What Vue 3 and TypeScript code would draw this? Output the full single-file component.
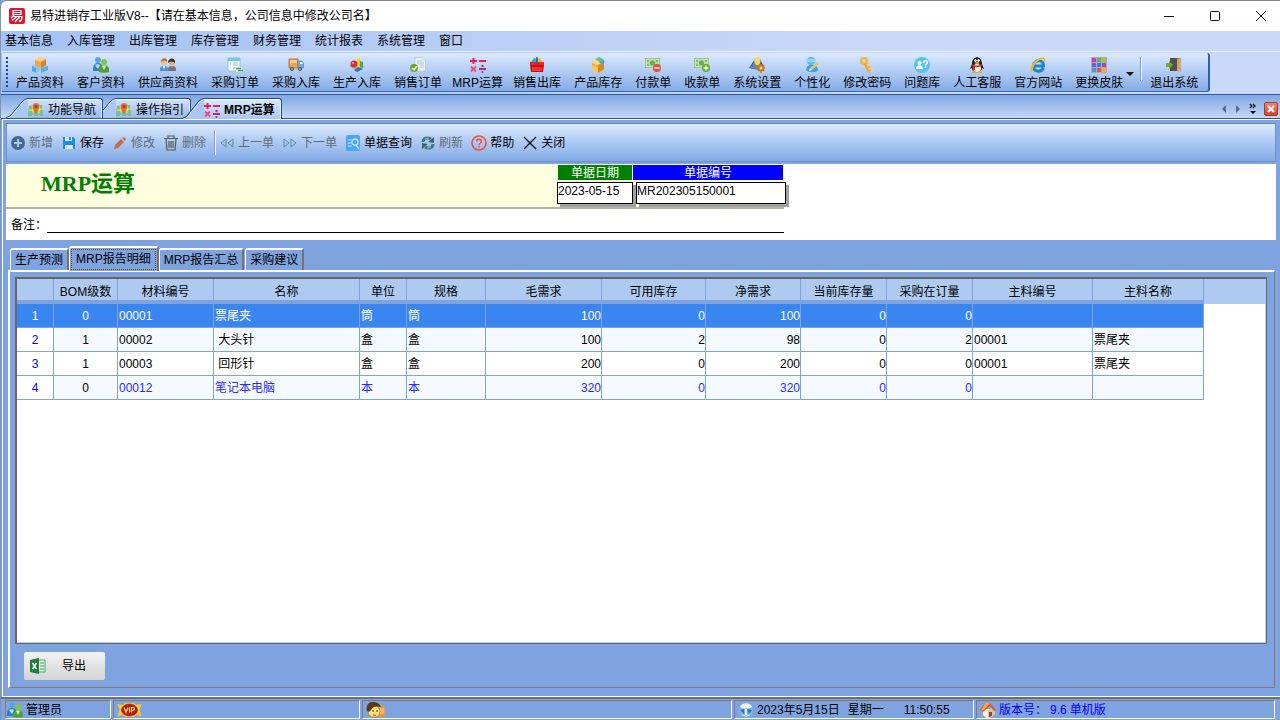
<script setup lang="ts">
import { ref } from 'vue'

interface Tool { icon: string; label: string; narrow?: boolean }
interface Action extends Tool { off?: boolean; sep?: boolean }
interface Column { label: string; width: number; align: string }

const menus = ['基本信息', '入库管理', '出库管理', '库存管理', '财务管理', '统计报表', '系统管理', '窗口']

const tools: Tool[] = [
  { icon: 'boxes', label: '产品资料' },
  { icon: 'buddies', label: '客户资料' },
  { icon: 'people', label: '供应商资料' },
  { icon: 'order', label: '采购订单' },
  { icon: 'truck', label: '采购入库' },
  { icon: 'shapes', label: '生产入库' },
  { icon: 'docok', label: '销售订单' },
  { icon: 'calc', label: 'MRP运算', narrow: true },
  { icon: 'basket', label: '销售出库' },
  { icon: 'stock', label: '产品库存' },
  { icon: 'pay', label: '付款单' },
  { icon: 'receive', label: '收款单' },
  { icon: 'settings', label: '系统设置' },
  { icon: 'custom', label: '个性化' },
  { icon: 'keys', label: '修改密码' },
  { icon: 'faq', label: '问题库' },
  { icon: 'penguin', label: '人工客服' },
  { icon: 'browser', label: '官方网站' },
  { icon: 'skin', label: '更换皮肤' },
]

const docTabs: Tool[] = [
  { icon: 'map', label: '功能导航' },
  { icon: 'map', label: '操作指引' },
  { icon: 'calc', label: 'MRP运算' },
]
const activeDoc = ref(2)

const actions: Action[] = [
  { icon: 'add', label: '新增', off: true },
  { icon: 'save', label: '保存' },
  { icon: 'pencil', label: '修改', off: true },
  { icon: 'trash', label: '删除', off: true, sep: true },
  { icon: 'prev', label: '上一单', off: true },
  { icon: 'next', label: '下一单', off: true },
  { icon: 'query', label: '单据查询' },
  { icon: 'refresh', label: '刷新', off: true },
  { icon: 'help', label: '帮助' },
  { icon: 'cross', label: '关闭' },
]

const pages = ['生产预测', 'MRP报告明细', 'MRP报告汇总', '采购建议']
const activePage = ref(1)

const billDate = ref('2023-05-15')
const billNo = ref('MR202305150001')
const remark = ref('')

const columns: Column[] = [
  { label: '', width: 37, align: 'c' },
  { label: 'BOM级数', width: 64, align: 'c' },
  { label: '材料编号', width: 96, align: 'l' },
  { label: '名称', width: 146, align: 'l' },
  { label: '单位', width: 47, align: 'l' },
  { label: '规格', width: 79, align: 'l' },
  { label: '毛需求', width: 116, align: 'r' },
  { label: '可用库存', width: 104, align: 'r' },
  { label: '净需求', width: 95, align: 'r' },
  { label: '当前库存量', width: 86, align: 'r' },
  { label: '采购在订量', width: 86, align: 'r' },
  { label: '主料编号', width: 120, align: 'l' },
  { label: '主料名称', width: 111, align: 'l' },
]

const rows: string[][] = [
  ['1', '0', '00001', '票尾夹', '筒', '筒', '100', '0', '100', '0', '0', '', ''],
  ['2', '1', '00002', ' 大头针', '盒', '盒', '100', '2', '98', '0', '2', '00001', '票尾夹'],
  ['3', '1', '00003', ' 回形针', '盒', '盒', '200', '0', '200', '0', '0', '00001', '票尾夹'],
  ['4', '0', '00012', '笔记本电脑', '本', '本', '320', '0', '320', '0', '0', '', ''],
]
const selected = ref(0)
</script>

<template>
  <svg class="defs" aria-hidden="true">
    <symbol id="boxes" viewBox="0 0 16 16">
      <path d="M0 9l4-2 4 2v5l-4 2-4-2z" fill="#8cc8f0" /><path d="M0 9l4 2v5l-4-2z" fill="#5aa5dc" />
      <path d="M8 9l4-2 4 2v4l-7 3-1-2z" fill="#9bd3f5" /><path d="M9 11l7-2v4l-7 3z" fill="#64abdf" />
      <path d="M3 3l5-3 6 2v6l-5 3-6-3z" fill="#f3a447" /><path d="M3 3l5-3 6 2-5 3z" fill="#ffd18a" /><path d="M9 5l5-3v6l-5 3z" fill="#d9812b" />
    </symbol>
    <symbol id="buddies" viewBox="0 0 16 16">
      <circle cx="5" cy="3" r="3" fill="#59a8de" /><path d="M0 14c0-5 1-8 5-8s5 3 5 8z" fill="#2f7fc4" /><path d="M2 8c1-1 4-1 5 0l-2 4z" fill="#b9e0f7" />
      <circle cx="11" cy="5" r="3" fill="#7fc64a" /><path d="M6 15c-1-5 2-7 5-7s6 2 5 7c-3 1-8 1-10 0z" fill="#4fa32a" /><path d="M9 9c1-1 3-1 4 0l-2 4z" fill="#d3f2b5" />
    </symbol>
    <symbol id="people" viewBox="0 0 16 16">
      <circle cx="4" cy="5" r="3" fill="#f5bd88" /><path d="M1 5c0-5 7-5 6 0-2-2-4-2-6 0z" fill="#bb6a26" /><path d="M0 14c0-4 1-5 4-5s4 1 4 5z" fill="#4c8fd6" /><path d="M3 9h2l-1 4z" fill="#fff" />
      <circle cx="12" cy="5" r="3" fill="#e9a673" /><path d="M8 6c0-6 8-6 7 0-2-2-4-2-7 0z" fill="#3b2d28" /><path d="M8 14c0-4 1-5 4-5s4 1 4 5z" fill="#776e7c" /><path d="M11 9h2l-1 4z" fill="#f05d4e" />
    </symbol>
    <symbol id="order" viewBox="0 0 16 16">
      <path d="M1 1h12v13H1z" fill="#fff" stroke="#83c7de" /><path d="M1 1h12v3H1z" fill="#77c7e2" /><path d="M3 6h1m2 0h5M3 8h1m2 0h5M3 11h1m2 0h3" stroke="#7ebfd0" />
      <path d="M9 10h6v5H9z" fill="#d9f0d3" /><path d="M9 11.500h5m-3 2h5" stroke="#4daa4e" stroke-width="1.400" />
    </symbol>
    <symbol id="truck" viewBox="0 0 16 16">
      <path d="M1 2h9v9H1z" fill="#e9a462" stroke="#bd7434" /><path d="M2 3h7v3H2z" fill="#f7c891" /><path d="M10 4h4l2 3v4h-6z" fill="#75add8" stroke="#477ba6" stroke-width=".6" /><path d="M12 5h2l1 2h-3z" fill="#dff2ff" />
      <circle cx="4" cy="12" r="2" fill="#555" /><circle cx="12" cy="12" r="2" fill="#555" /><circle cx="4" cy="12" r=".8" fill="#ddd" /><circle cx="12" cy="12" r=".8" fill="#ddd" />
    </symbol>
    <symbol id="shapes" viewBox="0 0 16 16">
      <path d="M0 9l6-4 10 4-7 6z" fill="#90b8e6" /><path d="M8 2l3-1v9l-3 2z" fill="#efcf3c" /><path d="M11 4l3 1v6l-3-1z" fill="#4ca84d" /><circle cx="5" cy="7" r="3.5" fill="#d63232" /><circle cx="4" cy="6" r="1" fill="#ff9a9a" /><path d="M9 10l5 2-6 3-3-2z" fill="#456cb4" />
    </symbol>
    <symbol id="docok" viewBox="0 0 16 16">
      <path d="M5 .5h8l2.500 2.500v11H5z" fill="#e8eff2" stroke="#b3c4cd" stroke-width=".7" /><path d="M13 .5v2.500h2.500" fill="#fff" stroke="#b3c4cd" stroke-width=".7" /><path d="M7 4h5M7 6h7M9 8h5m-4 2h4" stroke="#b7c9d0" />
      <circle cx="4" cy="11" r="4" fill="#6ca62c" /><path d="M2 11l2 2 3-4" fill="none" stroke="#fff" stroke-width="1.4" />
    </symbol>
    <symbol id="calc" viewBox="0 0 16 16">
      <path d="M3.500 1v6M0 4h7" stroke="#ec1b5a" stroke-width="2" /><path d="M9 4h7" stroke="#ec1b5a" stroke-width="2" /><path d="M1 9.500l5 5m0-5l-5 5" stroke="#f0497c" stroke-width="2" /><path d="M9 12h7" stroke="#b52a74" stroke-width="2" /><circle cx="12.500" cy="9" r="1.200" fill="#b52a74" /><circle cx="12.500" cy="15" r="1" fill="#b52a74" />
    </symbol>
    <symbol id="basket" viewBox="0 0 16 16">
      <path d="M2 5l3-4 3 1v4z" fill="#27aee3" /><path d="M8 2l3-1 3 4H8z" fill="#f1b73b" /><path d="M1 5h14v4H1z" fill="#ef2323" /><path d="M1 8h14l-1 7H2z" fill="#cc1010" /><path d="M3 11h10M3 13h10" stroke="#ff6464" /><path d="M8 0v7" stroke="#34536b" stroke-width="1.500" />
    </symbol>
    <symbol id="stock" viewBox="0 0 16 16">
      <path d="M2 6l6 2 6-3v7l-6 4-6-3z" fill="#f3ae39" /><path d="M8 8l6-3v7l-6 4z" fill="#d9871f" /><path d="M1 5l4-2 4 3-2 2z" fill="#ffd771" /><path d="M5 2l4-2 4 2-3 3z" fill="#73c451" /><path d="M9 5l4-3 2 3-4 2z" fill="#4ba5d6" /><path d="M2 8l6 3v5l-6-3z" fill="#ffc75f" />
    </symbol>
    <symbol id="pay" viewBox="0 0 16 16">
      <path d="M0 1h15v10H0z" fill="#7fb56d" /><path d="M1 2h13v8H1z" fill="#b5dba0" stroke="#e4f3da" stroke-width=".6" /><circle cx="7.500" cy="6" r="2.500" fill="#6ea75c" /><path d="M2 4h2m7 0h2M2 8h2" stroke="#659b57" /><circle cx="12" cy="11" r="4" fill="#e54c37" /><path d="M9.500 11h5" stroke="#fff" stroke-width="1.600" />
    </symbol>
    <symbol id="receive" viewBox="0 0 16 16">
      <path d="M0 1h15v10H0z" fill="#7fb56d" /><path d="M1 2h13v8H1z" fill="#b5dba0" stroke="#e4f3da" stroke-width=".6" /><circle cx="7.500" cy="6" r="2.500" fill="#6ea75c" /><path d="M2 4h2m7 0h2M2 8h2" stroke="#659b57" /><circle cx="12" cy="11" r="4" fill="#63a927" /><path d="M9.500 11h5M12 8.500v5" stroke="#fff" stroke-width="1.400" />
    </symbol>
    <symbol id="settings" viewBox="0 0 16 16">
      <path d="M0 11L6 2h5l4 8-5 3z" fill="#385f92" /><path d="M1 11l6-8v9z" fill="#5e88b8" /><path d="M8 0c5 0 4 5 2 8H7C4 4 5 0 8 0z" fill="#f5d56b" /><path d="M7 8h3v3H7z" fill="#888" /><circle cx="12" cy="11" r="2.500" fill="#f8dda0" stroke="#c87a18" stroke-width="2" /><path d="M12 7v1m0 6v2m-5-5h2m6 0h1M9 8l1 1m5 5l-1-1m1-5l-1 1m-5 5l1-1" stroke="#c87a18" stroke-width="1.500" />
    </symbol>
    <symbol id="custom" viewBox="0 0 16 16">
      <circle cx="7" cy="4" r="4" fill="#5bbdf1" /><path d="M2 2h10v3H2z" fill="#91d6fb" /><path d="M2 13c0-7 12-7 12 0-1 3-10 3-12 0z" fill="#38a5e8" /><path d="M6 11l7-6 2 2-7 6-3 1z" fill="#eebf63" /><path d="M5 14l1-3 2 2z" fill="#fff1ce" />
    </symbol>
    <symbol id="keys" viewBox="0 0 16 16">
      <path d="M7 5l8 8-1 2-3-1-6-7z" fill="#e0cfae" /><circle cx="5" cy="4" r="3" fill="none" stroke="#f4b83d" stroke-width="2.500" /><path d="M5 7l3 7 3 2-1-3-3-7z" fill="#eea52a" /><path d="M8 11l3-1m-2 4l3-1" stroke="#f0b33a" stroke-width="1.500" />
    </symbol>
    <symbol id="faq" viewBox="0 0 16 16">
      <circle cx="8" cy="8" r="8" fill="#55c4ed" /><circle cx="5.500" cy="6" r="2" fill="#fff" /><path d="M2 12c0-5 7-5 7 0z" fill="#fff" /><path d="M9.500 6c0-3 4-3 4-1 0 2-2 2-2 3.500m0 1v1.500" fill="none" stroke="#fff" stroke-width="1.500" />
    </symbol>
    <symbol id="penguin" viewBox="0 0 16 16">
      <path d="M3 7c0-9 10-9 10 0l2 5-2-1c0 5-10 5-10 0l-2 1z" fill="#191919" /><ellipse cx="8" cy="11" rx="4" ry="4" fill="#fff" /><ellipse cx="6.500" cy="3.500" rx="1.200" ry="1.600" fill="#fff" /><ellipse cx="9.500" cy="3.500" rx="1.200" ry="1.600" fill="#fff" /><path d="M5 6q3-2 6 0-3 2-6 0" fill="#f6a821" /><path d="M3 7q5 3 10 0v2q-5 2-7 1v3H4z" fill="#df2b25" /><path d="M3 15q2-2 5 0 3-2 5 0v1H3z" fill="#f3a51b" />
    </symbol>
    <symbol id="browser" viewBox="0 0 16 16">
      <path d="M13.500 11C11 16 3 15 3.500 8.500S14 2 13.500 9H5" fill="none" stroke="#1f83d0" stroke-width="3" /><path d="M1 15C-2 9 8-2 15 1c1 2-1 4-1 4 1-7-12 1-11 9z" fill="#f1b52b" />
    </symbol>
    <symbol id="skin" viewBox="0 0 16 16">
      <path d="M0 0h16v16H0z" fill="#b9a6b4" /><path d="M1 1h4v4H1z" fill="#d630cf" /><path d="M6 1h4v4H6z" fill="#55bd45" /><path d="M11 1h4v4h-4z" fill="#86d331" /><path d="M1 6h4v4H1z" fill="#765be2" /><path d="M6 6h4v4H6z" fill="#2583e8" /><path d="M11 6h4v4h-4z" fill="#a53de0" /><path d="M1 11h4v4H1z" fill="#31a1e5" /><path d="M6 11h4v4H6z" fill="#ef5038" /><path d="M11 11h4v4h-4z" fill="#efb02d" />
    </symbol>
    <symbol id="exit" viewBox="0 0 16 16">
      <path d="M4 1h11v13H4z" fill="#b4814b" /><path d="M4 1h7v13H4z" fill="#55504d" /><path d="M11 3l4-2v14l-4-1z" fill="#d5a669" /><path d="M0 6h3V4l4 4-4 4v-2H0z" fill="#6caf22" />
    </symbol>
    <symbol id="map" viewBox="0 0 16 16">
      <path d="M1 4l13-1 1 11H0z" fill="#80c15a" /><path d="M1 8l14-1M5 4v10m6-10v10" stroke="#f5e7a1" stroke-width="1.200" /><path d="M1 11.500l14 1" stroke="#6cb8e0" stroke-width="2" /><path d="M8 12C3 6 4 1 8 1s5 4 0 11z" fill="#ed6c2f" /><circle cx="8" cy="4.500" r="1.600" fill="#8c4b22" />
    </symbol>
    <symbol id="add" viewBox="0 0 16 16"><circle cx="8" cy="8" r="7" fill="#476890" /><path d="M8 4v8M4 8h8" stroke="#a9c6ed" stroke-width="2" /></symbol>
    <symbol id="save" viewBox="0 0 16 16"><path d="M2 2h10l2 2v10H2z" fill="#168bf0" /><path d="M4 2h7v4H4z" fill="#dcecff" /><path d="M8 2h2v3H8z" fill="#168bf0" /><path d="M4 10h8v4H4z" fill="#dcecff" /></symbol>
    <symbol id="pencil" viewBox="0 0 16 16"><path d="M2 14l1-4 6-6 3 3-6 6z" fill="#c86a43" /><path d="M10 3l2-1 2 2-1 2z" fill="#c86a43" /></symbol>
    <symbol id="trash" viewBox="0 0 16 16"><path d="M3 4l1 11h8l1-11M1 3.500h14M5 3V1h6v2M6 6v7m2-7v7m2-7v7" fill="none" stroke="#575b51" stroke-width="1.200" /></symbol>
    <symbol id="prev" viewBox="0 0 16 16"><path d="M7 4v8L2 8zM14 4v8L9 8z" fill="none" stroke="#5d8898" /></symbol>
    <symbol id="next" viewBox="0 0 16 16"><path d="M2 4v8l5-4zM9 4v8l5-4z" fill="none" stroke="#4e929b" /></symbol>
    <symbol id="query" viewBox="0 0 16 16"><rect x="1" y="0" width="14" height="16" rx="2" fill="#4ca6f2" /><path d="M3 5h4M3 8h3m-3 3h4" stroke="#c5e2ff" /><circle cx="10" cy="7" r="3" fill="none" stroke="#c5e2ff" stroke-width="1.300" /><path d="M11 10l3 4" stroke="#c5e2ff" stroke-width="1.300" /></symbol>
    <symbol id="refresh" viewBox="0 0 16 16"><path d="M3 7c0-4 5-5 8-3m2 5c0 4-5 5-8 3" fill="none" stroke="#3f7884" stroke-width="3" /><path d="M8 7l6 1V2zM8 9l-6-1v6z" fill="#42636e" /><path d="M5 4l4-1m-2 10l4-1" stroke="#8fc6d2" /></symbol>
    <symbol id="help" viewBox="0 0 16 16"><circle cx="8" cy="8" r="7" fill="none" stroke="#f04b32" stroke-width="1.600" /><path d="M5.500 6.500c0-3 5-3 5 0 0 1.500-2.500 1.500-2.500 3.500m0 1v1.500" fill="none" stroke="#f04b32" stroke-width="1.400" /></symbol>
    <symbol id="cross" viewBox="0 0 16 16"><path d="M2 2l12 12M14 2L2 14" stroke="#111" stroke-width="1.400" /></symbol>
    <symbol id="excel" viewBox="0 0 16 16"><path d="M8 2h7v12H8z" fill="#e6f4e8" stroke="#4ea568" /><path d="M10 5h4m-4 3h4m-4 3h4" stroke="#71bd83" stroke-width="1.500" /><path d="M0 2l9-2v16l-9-2z" fill="#1d7d3f" /><path d="M2.500 5l4 6m0-6l-4 6" stroke="#fff" stroke-width="1.500" /></symbol>
    <symbol id="vip" viewBox="0 0 24 16"><path d="M0 2l5 1 3-2h8l3 2 5-1-2 6 2 6-5-1-3 2H8l-3-2-5 1 2-6z" fill="#f8cb35" /><ellipse cx="12" cy="8" rx="8" ry="6" fill="#c51310" stroke="#8f2a08" stroke-width=".6" /><path d="M6.500 5.500l2 5 2-5M12 5.500v5m2 0v-5h2q2 1 0 3h-2" fill="none" stroke="#ffe474" stroke-width="1.200" /></symbol>
    <symbol id="face" viewBox="0 0 20 16"><path d="M11 4h8v11h-8z" fill="#f0953d" /><path d="M14 7h4m-4 2h4m-4 2h4" stroke="#ffd19a" /><circle cx="8" cy="9.500" r="6" fill="#ffe177" stroke="#ac6d27" stroke-width=".7" /><path d="M1 9C-2-3 13-2 15 5 10 4 7 4 5 8l-2 2z" fill="#5e3620" /><path d="M7 8v2m4-2v2" stroke="#333" /><path d="M7 13q2 1 3 0" fill="none" stroke="#c32c1e" /></symbol>
    <symbol id="globe" viewBox="0 0 16 16"><circle cx="8" cy="8" r="7" fill="#7db4e0" /><path d="M2 5c2-5 10-5 12 0-3 2-9 2-12 0z" fill="#eef6fb" /><path d="M2 8l4-1v5zM9 7l5 1-3 4-1-2z" fill="#2f70b4" /><path d="M7 7h2v6H7z" fill="#d7eaf8" /><path d="M4 13q4 2 8 0" fill="none" stroke="#d7eaf8" /></symbol>
    <symbol id="home" viewBox="0 0 16 16"><path d="M3 7h9v8l-6 1-3-3z" fill="#fff4dc" /><path d="M8 9l4-4 3 4v4l-7 3z" fill="#d8c2a0" /><path d="M0 8l5-7h5l6 7-2 1-4-5-7 6z" fill="#df5b24" /><path d="M5 1h5l-6 7-3 1z" fill="#ff9b55" /><path d="M9 10h3v4l-3 1z" fill="#8b4a24" /></symbol>
  </svg>

  <div class="app">
    <header class="title">
      <svg class="logo" viewBox="0 0 16 16"><rect width="16" height="16" rx="2" fill="#e8112d" /><path d="M4 2.500h8v4H4zM4 4.500h8M5 7L2 10M4 8.500h9q0 4-2 5l-1-1M7.500 9L3 12.500M10.500 9L6 14" fill="none" stroke="#fff" stroke-width="1.200" /></svg>
      <h1>易特进销存工业版V8--【请在基本信息，公司信息中修改公司名】</h1>
      <button class="win" aria-label="最小化"><svg viewBox="0 0 12 12"><path d="M1 6.500h10" /></svg></button>
      <button class="win" aria-label="最大化"><svg viewBox="0 0 12 12"><rect x="1.500" y="1.500" width="9" height="9" rx="1" /></svg></button>
      <button class="win" aria-label="关闭窗口"><svg viewBox="0 0 12 12"><path d="M1 1l10 10M11 1L1 11" /></svg></button>
    </header>

    <nav class="menu">
      <button v-for="m in menus" :key="m">{{ m }}</button>
    </nav>

    <div class="band">
      <div class="tools">
        <i class="grip"></i>
        <button v-for="t in tools" :key="t.label" :class="{ narrow: t.narrow }"><svg><use :href="'#' + t.icon" /></svg>{{ t.label }}</button>
        <button class="drop" aria-label="更多皮肤"><i></i></button>
        <i class="rule"></i>
        <button><svg><use href="#exit" /></svg>退出系统</button>
      </div>
    </div>

    <div class="doctabs">
      <button v-for="(t, i) in docTabs" :key="t.label" class="tab" :class="{ on: activeDoc === i }" @click="activeDoc = i">
        <svg class="slope" viewBox="0 0 22 20" preserveAspectRatio="none"><path class="fill" d="M0 20Q3 19 5 17L16 4Q19 0 22 0V20z" /><path class="hi" d="M1 20Q4 19 6 17L17 4Q20 1.500 22 1.500" /><path class="edge" d="M0 19.500Q3 19 5 17L16 4Q19 .5 22 .5" /></svg>
        <span><svg><use :href="'#' + t.icon" /></svg>{{ t.label }}</span>
      </button>
      <div class="nav">
        <button aria-label="向左"><svg viewBox="0 0 6 10"><path d="M5 1v8L1 5z" /></svg></button>
        <button aria-label="向右"><svg viewBox="0 0 6 10"><path d="M1 1v8l4-4z" /></svg></button>
        <button class="more" aria-label="更多标签"><svg viewBox="0 0 8 12"><path d="M1 1l2 2-2 2m3-4l2 2-2 2" fill="none" stroke="#000" stroke-width="1.200" /><path d="M1 8h6l-3 3z" fill="#000" /></svg></button>
        <button class="x" aria-label="关闭标签"><svg viewBox="0 0 10 10"><path d="M2 2l6 6M8 2L2 8" /></svg></button>
      </div>
    </div>

    <main>
      <div class="actions">
        <template v-for="a in actions" :key="a.label">
          <button :disabled="a.off"><svg><use :href="'#' + a.icon" /></svg>{{ a.label }}</button>
          <i v-if="a.sep" class="rule"></i>
        </template>
      </div>

      <section class="head">
        <div class="banner">
          <h2>MRP运算</h2>
          <div class="field date"><label for="date">单据日期</label><input id="date" v-model="billDate"></div>
          <div class="field code"><label for="code">单据编号</label><input id="code" v-model="billNo"></div>
        </div>
        <div class="note"><label for="note">备注：</label><input id="note" v-model="remark"></div>
      </section>

      <div class="pages">
        <button v-for="(p, i) in pages" :key="p" :class="{ on: activePage === i }" @click="activePage = i"><span>{{ p }}</span></button>
      </div>

      <section class="panel">
        <div class="grid">
          <table>
            <colgroup>
              <col v-for="(c, i) in columns" :key="i" :style="{ width: c.width + 'px' }">
              <col>
            </colgroup>
            <thead>
              <tr><th v-for="(c, i) in columns" :key="i">{{ c.label }}</th><th class="rest"></th></tr>
            </thead>
            <tbody>
              <tr v-for="(r, i) in rows" :key="i" :class="{ sel: selected === i, link: i === 3 }" @click="selected = i">
                <td v-for="(v, j) in r" :key="j" :class="columns[j].align">{{ v }}</td><td class="rest"></td>
              </tr>
            </tbody>
          </table>
        </div>
        <button class="export"><svg><use href="#excel" /></svg><span>导出</span></button>
      </section>
    </main>

    <footer>
      <div class="cell user"><svg><use href="#buddies" /></svg>管理员</div>
      <div class="cell member"><svg class="vip"><use href="#vip" /></svg></div>
      <div class="cell wide"><svg class="face"><use href="#face" /></svg></div>
      <div class="cell clock"><svg><use href="#globe" /></svg><span>2023年5月15日</span><span>星期一</span><time>11:50:55</time></div>
      <div class="cell ver"><svg><use href="#home" /></svg>版本号：<b>9.6</b> 单机版</div>
    </footer>
  </div>
</template>

<style>
html, body { margin: 0; }
</style>

<style scoped>
* { box-sizing: border-box; }
.defs { position: absolute; width: 0; height: 0; }
.app {
  display: flex; flex-direction: column; min-height: 100vh; overflow: hidden;
  font: 12px/16px "Liberation Sans", "Noto Sans CJK SC", sans-serif; color: #000;
  background: #7ea3df; border-left: 1px solid #7d94b4;
}
button { font: inherit; color: inherit; background: none; border: 0; padding: 0; margin: 0; white-space: nowrap; }
svg { display: block; width: 16px; height: 16px; flex: none; }
h1, h2 { margin: 0; }

.title { display: flex; align-items: center; height: 31px; background: #fff; border-top: 1px solid #858585; padding-left: 8px; border-radius: 6px 0 0 0; }
.title h1 { flex: 1; font-size: 12px; font-weight: 400; margin-left: 5px; }
.win { width: 46px; height: 30px; display: flex; align-items: center; justify-content: center; }
.win:last-child { width: 38px; margin-left: 4px; margin-right: 0; }
.win:last-child { margin-left: 4px; }
.win svg { width: 12px; height: 12px; fill: none; stroke: #111; stroke-width: 1; }

.menu { display: flex; gap: 14px; height: 20px; align-items: center; padding-left: 4px; background: linear-gradient(90deg, #a3c2f5, #cbd9f8 70%); }

.band { height: 44px; padding: 1px 0 2px; display: flex; background: linear-gradient(90deg, #a3c2f5, #cbd9f8 70%); border-top: 1px solid #e9effc; border-bottom: 1px solid #2f57a0; }
.tools { display: flex; gap: 13px; align-items: flex-start; padding: 4px 10px 0 4px; margin-left: 1px; background: linear-gradient(#dce9fc, #b5cff5 45%, #83abe6); border-right: 2px solid #2a5fc2; border-bottom: 1px solid #3a68b0; border-radius: 0 3px 3px 0; }
.tools button { display: flex; flex-direction: column; align-items: center; }
.tools button svg { margin-bottom: 2px; }
.tools .narrow { width: 45px; }
.grip { width: 2px; height: 31px; margin-right: -5px; background: repeating-linear-gradient(#27448a 0 2px, transparent 2px 4px); }
.tools .drop { width: 8px; margin: 15px -10px 0 -10px; }
.drop i { border: 4px solid transparent; border-top-color: #000; border-bottom: 0; }
.rule { width: 2px; height: 24px; background: linear-gradient(90deg, #7a9fd8 50%, #fff 50%); }
.tools .rule { margin: 0 -5px 0 3px; }

.doctabs { display: flex; align-items: flex-end; height: 24px; padding-left: 5px; background: linear-gradient(#7fa6e3, #c4d9f8); border-bottom: 1px solid #2f57a0; }
.tab { display: flex; height: 20px; position: relative; }
.tab + .tab { margin-left: -9px; }
.tab:first-child { z-index: 1; }
.slope { width: 22px; height: 20px; }
.slope .fill { fill: #a9c7f2; }
.slope .edge { fill: none; stroke: #1f4a94; }
.slope .hi { fill: none; stroke: #fff; }
.tab span { display: flex; align-items: center; gap: 4px; height: 20px; padding: 2px 6px 0 0; border-top: 1px solid #1f4a94; border-right: 1px solid #1f4a94; box-shadow: inset 0 1px #fff, inset -1px 0 #e6effc; border-radius: 0 3px 0 0; background: linear-gradient(#d2e2fa, #97b9ec); }
.tab.on { z-index: 2; height: 21px; margin-bottom: -1px; font-weight: 700; }
.tab.on span { height: 21px; padding-bottom: 1px; background: linear-gradient(#dce9fc, #a9c7f2); }
.tab.on .slope { height: 21px; }
.nav { display: flex; align-items: center; gap: 8px; height: 19px; margin-left: auto; padding-right: 2px; }
.nav button { display: block; }
.nav svg { width: 6px; height: 10px; fill: #566a8c; }
.nav .more svg { width: 8px; height: 12px; }
.nav .x { width: 14px; height: 14px; margin-left: -1px; padding: 1px; border: 1px solid #a33a2c; border-radius: 2px; background: linear-gradient(#f0876f, #d6452c); }
.nav .x svg { width: 10px; height: 10px; stroke: #fff; stroke-width: 2; }

main { flex: 1; display: flex; flex-direction: column; margin: 0 0 0 1px; border-left: 1px solid #fff; border-top: 1px solid #fff; border-bottom: 1px solid #fff; padding: 3px 4px 8px 3px; }
.actions { display: flex; align-items: center; gap: 8px; height: 39px; padding: 0 3px; background: linear-gradient(#dce9fc, #b5cff5 40%, #82aae5); border: 1px solid #6f93c8; border-top-color: #5f86bf; }
.actions button { display: flex; align-items: center; gap: 3px; color: #000; }
.actions button:disabled { color: #626b7a; }
.actions .rule { margin-right: -5px; }

.head { margin-top: 2px; padding-bottom: 7px; background: #fff; }
.banner { display: flex; width: 778px; height: 45px; background: #ffffe0; border-bottom: 2px solid #b5b5a4; }
.banner h2 { flex: 1; padding: 7px 0 0 35px; font: 700 22px/26px "Liberation Serif", "Noto Sans CJK SC", serif; color: #008000; }
.field { display: flex; flex-direction: column; padding-top: 1px; }
.field label { height: 15px; line-height: 16px; color: #fff; text-align: center; margin-left: 1px; }
.field input { width: 100%; height: 22px; margin-top: 2px; padding: 0 0 4px; border: 1px solid #000; font: inherit; background: #fff; box-shadow: 3px 3px #a0a0a0; outline: 0; }
.date { width: 76px; }
.date label { background: #008000; margin-right: 1px; }
.code { width: 151px; }
.code label { background: #00f; margin: 0 1px 0 0; }
.code input { width: 150px; margin-left: 3px; }
.note { display: flex; align-items: flex-end; width: 778px; padding: 7px 0 0 5px; }
.note input { flex: 1; height: 17px; border: 0; border-bottom: 1px solid #000; padding: 0; font: inherit; outline: 0; min-width: 0; }

.pages { display: flex; align-items: flex-end; height: 30px; padding: 4px 0 0 4px; }
.pages button { height: 22px; padding: 0 4px; border: 1px solid #fff; border-width: 2px 2px 0 1px; border-right-color: #77736b; border-radius: 3px 3px 0 0; margin-right: 1px; }
.pages .on { position: relative; z-index: 1; height: 25px; margin: 0 0 -1px -1px; padding: 1px; background: #7ea3df; }
.pages .on span { display: block; height: 21px; line-height: 19px; padding: 0 4px; border: 1px dotted #6b4b13; }

.panel { flex: 1; display: flex; flex-direction: column; align-items: flex-start; margin-left: 2px; margin-right: 1px; padding: 5px 7px 7px 5px; border: 1px solid #807c75; border-width: 2px 1px 1px 2px; border-top-color: #fff; border-left-color: #fff; }
.grid { flex: 1; align-self: stretch; background: #fff; border: 1px solid #666; border-width: 2px 1px 1px 2px; box-shadow: inset -1px -1px #b5cff5; }
table { width: 100%; border-collapse: separate; border-spacing: 0; table-layout: fixed; }
th { height: 25px; padding: 1px 0 0; font-weight: 400; background: linear-gradient(#aecaf0 0 21px, #7ea3df 21px); border-right: 1px solid #7ea3df; }
th.rest { background: #aecaf0; border: 0; }
td { height: 24px; padding: 0 1px; border-right: 1px solid #7ea3df; border-bottom: 1px solid #7ea3df; white-space: pre; background: #fff; }
tr:nth-child(even) td { background: #f4fafd; }
td:first-child { color: #00f; }
tbody tr td:first-child { background: #fff; }
.c { text-align: center; }
.r { text-align: right; padding: 0; }
td.rest, tr:nth-child(even) td.rest { border: 0; background: none; }
.sel td:not(.rest), tbody tr.sel td:first-child { background: #3a86f0; color: #fff; }
.link td:nth-child(n + 3) { color: #2b2bff; }
.export { display: flex; align-items: center; gap: 16px; width: 81px; height: 28px; margin: 8px 0 0 9px; padding-left: 6px; border-radius: 2px; background: linear-gradient(#f2f2f2, #d4d4d4); }

footer { display: flex; height: 23px; padding: 1px 3px 1px 4px; border-top: 2px solid #6a6f78; }
.cell { display: flex; align-items: center; gap: 3px; border: 1px solid #fff; border-top-color: #807c75; border-left-color: #807c75; margin-right: 2px; height: 19px; }
.user { width: 106px; padding-left: 1px; }
.member { width: 247px; padding-left: 3px; }
.vip { width: 25px; }
.wide { flex: 1; padding-left: 3px; }
.face { width: 20px; }
.clock { width: 240px; padding-left: 3px; }
.clock span + span { margin-left: 5px; }
.clock time { margin-left: 17px; }
.ver { width: 299px; padding-left: 3px; color: #00f; }
.ver b { font-weight: 400; }
</style>
